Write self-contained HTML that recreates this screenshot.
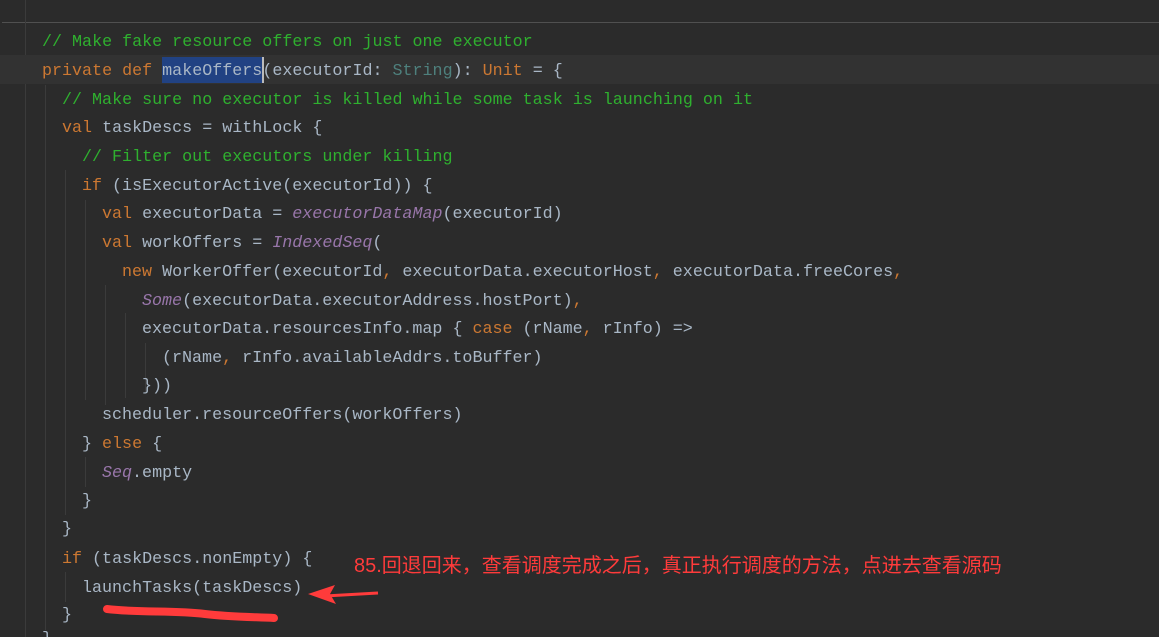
<!DOCTYPE html>
<html style="overflow:hidden;height:637px"><head><meta charset="utf-8"><style>
body{margin:0;width:1159px;height:637px;background:#2b2b2b;overflow:hidden;position:relative;font-family:"Liberation Mono","Noto Sans CJK SC",monospace;font-size:16.7px;color:#a9b7c6}
.l{position:absolute;left:0;height:28px;line-height:28px;white-space:pre}
.c{color:#2fb02f}.k{color:#cc7832}.t{color:#4e807d}.i{color:#9876aa;font-style:italic}
.g{position:absolute;width:1px;background:#3b3b3b}
</style></head><body>
<div style="position:absolute;left:2px;right:0;top:22px;height:1px;background:#505050"></div>
<div class="g" style="left:25px;top:0;height:637px"></div>
<div style="position:absolute;left:0;right:0;top:55px;height:29px;background:#323232"></div>
<div style="position:absolute;left:162px;width:100px;top:57px;height:26px;background:#214283"></div>
<div style="position:absolute;left:262px;width:2px;top:57px;height:26px;background:#bbb"></div>
<div class="g" style="left:45px;top:85px;height:545px"></div>
<div class="g" style="left:65px;top:170px;height:345px"></div>
<div class="g" style="left:65px;top:572px;height:30px"></div>
<div class="g" style="left:85px;top:200px;height:200px"></div>
<div class="g" style="left:85px;top:457px;height:30px"></div>
<div class="g" style="left:105px;top:285px;height:120px"></div>
<div class="g" style="left:125px;top:313px;height:85px"></div>
<div class="g" style="left:145px;top:343px;height:50px"></div>
<div class="l" style="top:29px;left:42px"><span class="c">// Make fake resource offers on just one executor</span></div>
<div class="l" style="top:58px;left:42px"><span class="k">private def </span>makeOffers(executorId: <span class="t">String</span>): <span class="k">Unit</span> = {</div>
<div class="l" style="top:87px;left:62px"><span class="c">// Make sure no executor is killed while some task is launching on it</span></div>
<div class="l" style="top:115px;left:62px"><span class="k">val </span>taskDescs = withLock {</div>
<div class="l" style="top:144px;left:82px"><span class="c">// Filter out executors under killing</span></div>
<div class="l" style="top:173px;left:82px"><span class="k">if </span>(isExecutorActive(executorId)) {</div>
<div class="l" style="top:201px;left:102px"><span class="k">val </span>executorData = <span class="i">executorDataMap</span>(executorId)</div>
<div class="l" style="top:230px;left:102px"><span class="k">val </span>workOffers = <span class="i">IndexedSeq</span>(</div>
<div class="l" style="top:259px;left:122px"><span class="k">new </span>WorkerOffer(executorId<span class="k">, </span>executorData.executorHost<span class="k">, </span>executorData.freeCores<span class="k">,</span></div>
<div class="l" style="top:288px;left:142px"><span class="i">Some</span>(executorData.executorAddress.hostPort)<span class="k">,</span></div>
<div class="l" style="top:316px;left:142px">executorData.resourcesInfo.map { <span class="k">case </span>(rName<span class="k">, </span>rInfo) =&gt;</div>
<div class="l" style="top:345px;left:162px">(rName<span class="k">, </span>rInfo.availableAddrs.toBuffer)</div>
<div class="l" style="top:373px;left:142px">}))</div>
<div class="l" style="top:402px;left:102px">scheduler.resourceOffers(workOffers)</div>
<div class="l" style="top:431px;left:82px">} <span class="k">else </span>{</div>
<div class="l" style="top:460px;left:102px"><span class="i">Seq</span>.empty</div>
<div class="l" style="top:488px;left:82px">}</div>
<div class="l" style="top:516px;left:62px">}</div>
<div class="l" style="top:546px;left:62px"><span class="k">if </span>(taskDescs.nonEmpty) {</div>
<div class="l" style="top:575px;left:82px">launchTasks(taskDescs)</div>
<div class="l" style="top:602px;left:62px">}</div>
<div class="l" style="top:626px;left:42px">}</div>
<div style="position:absolute;left:354px;top:549px;font-family:'Liberation Sans','Noto Sans CJK SC',sans-serif;font-size:20px;color:#ff3b3b;white-space:nowrap">85.回退回来，查看调度完成之后，真正执行调度的方法，点进去查看源码</div>
<svg style="position:absolute;left:0;top:0" width="1159" height="637">
<path d="M378 593 L325 596" stroke="#ff3b3b" stroke-width="3"/>
<path d="M308 594 L335 585 L330 594 L336 604 Z" fill="#ff3b3b"/>
<path d="M107 609 C140 613 175 610 205 614 C230 617 255 617 274 618" stroke="#ff3b3b" stroke-width="8" fill="none" stroke-linecap="round"/>
</svg>
</body></html>
